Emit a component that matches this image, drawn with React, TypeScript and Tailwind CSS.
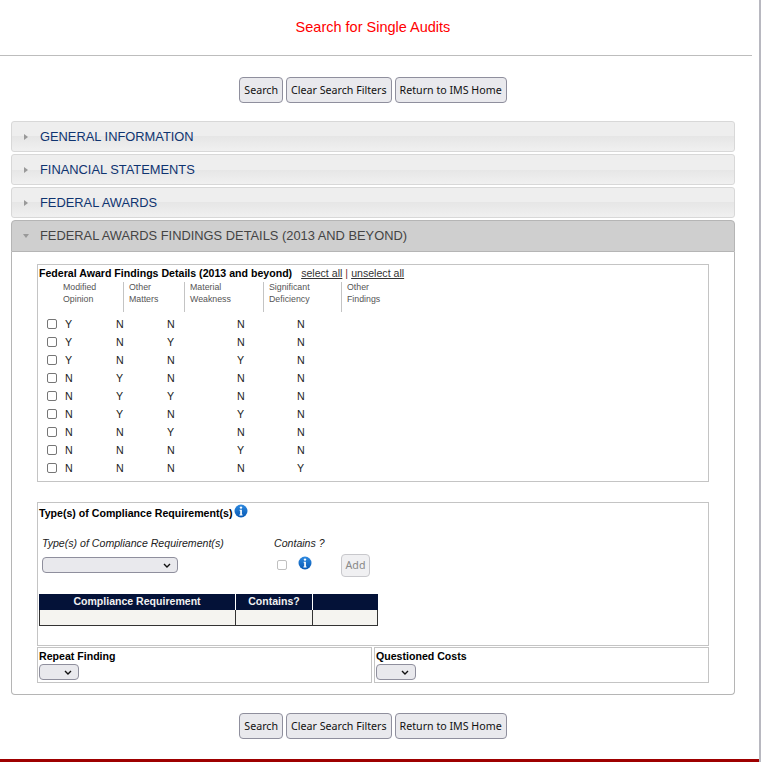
const rows = [
  ["Y", "N", "N", "N", "N"],
  ["Y", "N", "Y", "N", "N"],
  ["Y", "N", "N", "Y", "N"],
  ["N", "Y", "N", "N", "N"],
  ["N", "Y", "Y", "N", "N"],
  ["N", "Y", "N", "Y", "N"],
  ["N", "N", "Y", "N", "N"],
  ["N", "N", "N", "Y", "N"],
  ["N", "N", "N", "N", "Y"],
];

const heads = [
  ["Modified", "Opinion", "w-[84px] pl-[24px]", ""],
  ["Other", "Matters", "w-[61px] pl-[5px]", "border-l"],
  ["Material", "Weakness", "w-[79px] pl-[5px]", "border-l"],
  ["Significant", "Deficiency", "w-[78px] pl-[5px]", "border-l"],
  ["Other", "Findings", "w-[80px] pl-[5px]", "border-l"],
];

const colWidths = ["w-[51px]", "w-[51px]", "w-[70px]", "w-[60px]", "w-[40px]"];

function Buttons() {
  return (
    <div className="flex justify-center gap-[3px] font-['Noto_Sans',sans-serif] text-[10.67px] text-[#111]">
      {["Search", "Clear Search Filters", "Return to IMS Home"].map((b) => (
        <div
          key={b}
          className="flex h-[26px] items-center rounded-[4px] border border-[#8f8f9d] bg-[#e9e9ed] px-[4px]"
        >
          {b}
        </div>
      ))}
    </div>
  );
}

function Header({ label, open }: { label: string; open?: boolean }) {
  return (
    <div
      className={
        open
          ? "flex h-[32px] items-center rounded-t-[4px] border border-[#b5b5b5] bg-[#cfcfcf] text-[#444]"
          : "flex h-[31px] items-center rounded-[3px] border border-[#d8d8d8] bg-[linear-gradient(#eeeeee_50%,#e6e6e6_50%,#f0f0f0_100%)] text-[#0f3470]"
      }
    >
      {open ? (
        <span className="ml-[11px] h-0 w-0 border-x-[3px] border-t-[4px] border-x-transparent border-t-[#999]" />
      ) : (
        <span className="ml-[12px] h-0 w-0 border-y-[3px] border-l-[4px] border-y-transparent border-l-[#999]" />
      )}
      <span className={open ? "ml-[11px] text-[12.87px]" : "ml-[12px] text-[12.87px]"}>{label}</span>
    </div>
  );
}

function Info({ className = "", id }: { className?: string; id: string }) {
  return (
    <svg viewBox="0 0 14 14" className={`h-[14px] w-[14px] ${className}`}>
      <defs>
        <linearGradient id={id} x1="0" y1="0" x2="0" y2="1">
          <stop offset="0" stopColor="#2f8ae0" />
          <stop offset="1" stopColor="#0658b4" />
        </linearGradient>
      </defs>
      <circle cx="7" cy="7" r="6.5" fill={`url(#${id})`} />
      <circle cx="7" cy="3.6" r="1.2" fill="#fff" />
      <path d="M5.6 5.8h2.3v4.7h.7v1H5.4v-1h.8V6.8h-.6z" fill="#fff" />
    </svg>
  );
}

function Select({ className }: { className: string }) {
  return (
    <div className={`flex h-[16px] items-center justify-end rounded-[4px] border border-[#8f8f9d] bg-[#e9e9ed] pr-[6px] ${className}`}>
      <svg viewBox="0 0 8 5" className="h-[5px] w-[8px]">
        <path d="M1 1l3 3 3-3" fill="none" stroke="#111" strokeWidth="1.4" />
      </svg>
    </div>
  );
}

export default function App() {
  return (
    <div className="h-[762px] w-[761px] overflow-hidden bg-white font-['Liberation_Sans',Arial,sans-serif]">
      <div className="flex h-[762px] w-[761px] flex-col border-r-2 border-[#b8b8c0]">
        <div className="flex h-[56px] w-[752px] items-center justify-center border-b border-[#bdbdbd] pr-[6px] text-[14.5px] text-[#ff0000]">
          Search for Single Audits
        </div>
        <div className="mt-[21px] w-[746px]">
          <Buttons />
        </div>
        <div className="ml-[11px] mt-[18px] flex w-[724px] flex-col gap-[2px]">
          <Header label="GENERAL INFORMATION" />
          <Header label="FINANCIAL STATEMENTS" />
          <Header label="FEDERAL AWARDS" />
          <div>
            <Header label="FEDERAL AWARDS FINDINGS DETAILS (2013 AND BEYOND)" open />
            <div className="h-[443px] rounded-b-[4px] border border-t-0 border-[#b5b5b5] px-[25px] pt-[12px]">
              <div className="h-[218px] border border-[#c4c4c4] pl-[1px] pt-[2px]">
                <div className="flex h-[15px] items-start pt-[1px] text-[10.6px] leading-none">
                  <span className="font-bold text-black">Federal Award Findings Details (2013 and beyond)</span>
                  <span className="ml-[9px] text-[#333] underline">select all</span>
                  <span className="mx-[3px] text-[#733]">|</span>
                  <span className="text-[#333] underline">unselect all</span>
                </div>
                <div className="flex">
                  {heads.map((h) => (
                    <div
                      key={h[0] + h[1]}
                      className={`h-[30px] shrink-0 border-[#c4c4c4] text-[8.8px] leading-[12px] text-[#555] ${h[2]} ${h[3]}`}
                    >
                      <div className="-mt-[1px]">{h[0]}</div>
                      <div>{h[1]}</div>
                    </div>
                  ))}
                </div>
                <div className="mt-[3px] text-[10.67px] text-[#222]">
                  {rows.map((r, i) => (
                    <div key={i} className="flex h-[18px] items-center">
                      <span className="ml-[8px] h-[10px] w-[10px] rounded-[2px] border border-[#767676] bg-white" />
                      <div className="ml-[8px] flex">
                        {r.map((v, j) => (
                          <span key={j} className={`shrink-0 ${colWidths[j]}`}>
                            {v}
                          </span>
                        ))}
                      </div>
                    </div>
                  ))}
                </div>
              </div>
              <div className="mt-[20px] h-[144px] border border-[#c4c4c4] pl-[1px]">
                <div className="flex h-[20px] items-start pt-[1px]">
                  <span className="mt-[3px] text-[10.6px] font-bold leading-[13px] text-black">
                    Type(s) of Compliance Requirement(s)
                  </span>
                  <Info id="info-a" className="ml-[2px]" />
                </div>
                <div className="mt-[14px] flex h-[14px] items-center text-[10.6px] italic text-[#222]">
                  <span className="ml-[3px] w-[232px]">Type(s) of Compliance Requirement(s)</span>
                  <span>Contains ?</span>
                </div>
                <div className="mt-[2px] flex h-[24px] items-center">
                  <Select className="ml-[3px] w-[136px]" />
                  <span className="ml-[99px] h-[10px] w-[10px] rounded-[2px] border border-[#c0c0c0] bg-white" />
                  <Info id="info-b" className="ml-[11px] -translate-y-[2px]" />
                  <div className="ml-[29px] flex h-[23px] w-[29px] items-center justify-center rounded-[4px] border border-[#c8c8cc] bg-[#f0f0f2] font-['Noto_Sans',sans-serif] text-[10.67px] text-[#888]">
                    Add
                  </div>
                </div>
                <div className="mt-[17px] w-[339px]">
                  <div className="flex h-[16px] bg-[#041238] text-[10.56px] font-bold text-[#f0f0f0]">
                    <div className="flex w-[196px] items-center justify-center">Compliance Requirement</div>
                    <div className="flex w-[77px] items-center justify-center border-l border-white">Contains?</div>
                    <div className="flex-1 border-l border-white" />
                  </div>
                  <div className="flex h-[16px] border-x border-b border-[#333] bg-[#f5f4f0]">
                    <div className="w-[195px]" />
                    <div className="w-[77px] border-l border-[#333]" />
                    <div className="flex-1 border-l border-[#333]" />
                  </div>
                </div>
              </div>
              <div className="mt-[1px] flex gap-[2px]">
                <div className="h-[36px] w-[335px] border border-[#c4c4c4] pl-[1px]">
                  <div className="h-[16px] text-[10.6px] font-bold leading-[16px] text-black">Repeat Finding</div>
                  <Select className="w-[40px]" />
                </div>
                <div className="h-[36px] w-[335px] border border-[#c4c4c4] pl-[1px]">
                  <div className="h-[16px] text-[10.6px] font-bold leading-[16px] text-black">Questioned Costs</div>
                  <Select className="w-[40px]" />
                </div>
              </div>
            </div>
          </div>
        </div>
        <div className="mt-[18px] w-[746px]">
          <Buttons />
        </div>
      </div>
      <div className="-mt-[3px] h-[3px] w-[759px] bg-[#9e0000]" />
    </div>
  );
}
